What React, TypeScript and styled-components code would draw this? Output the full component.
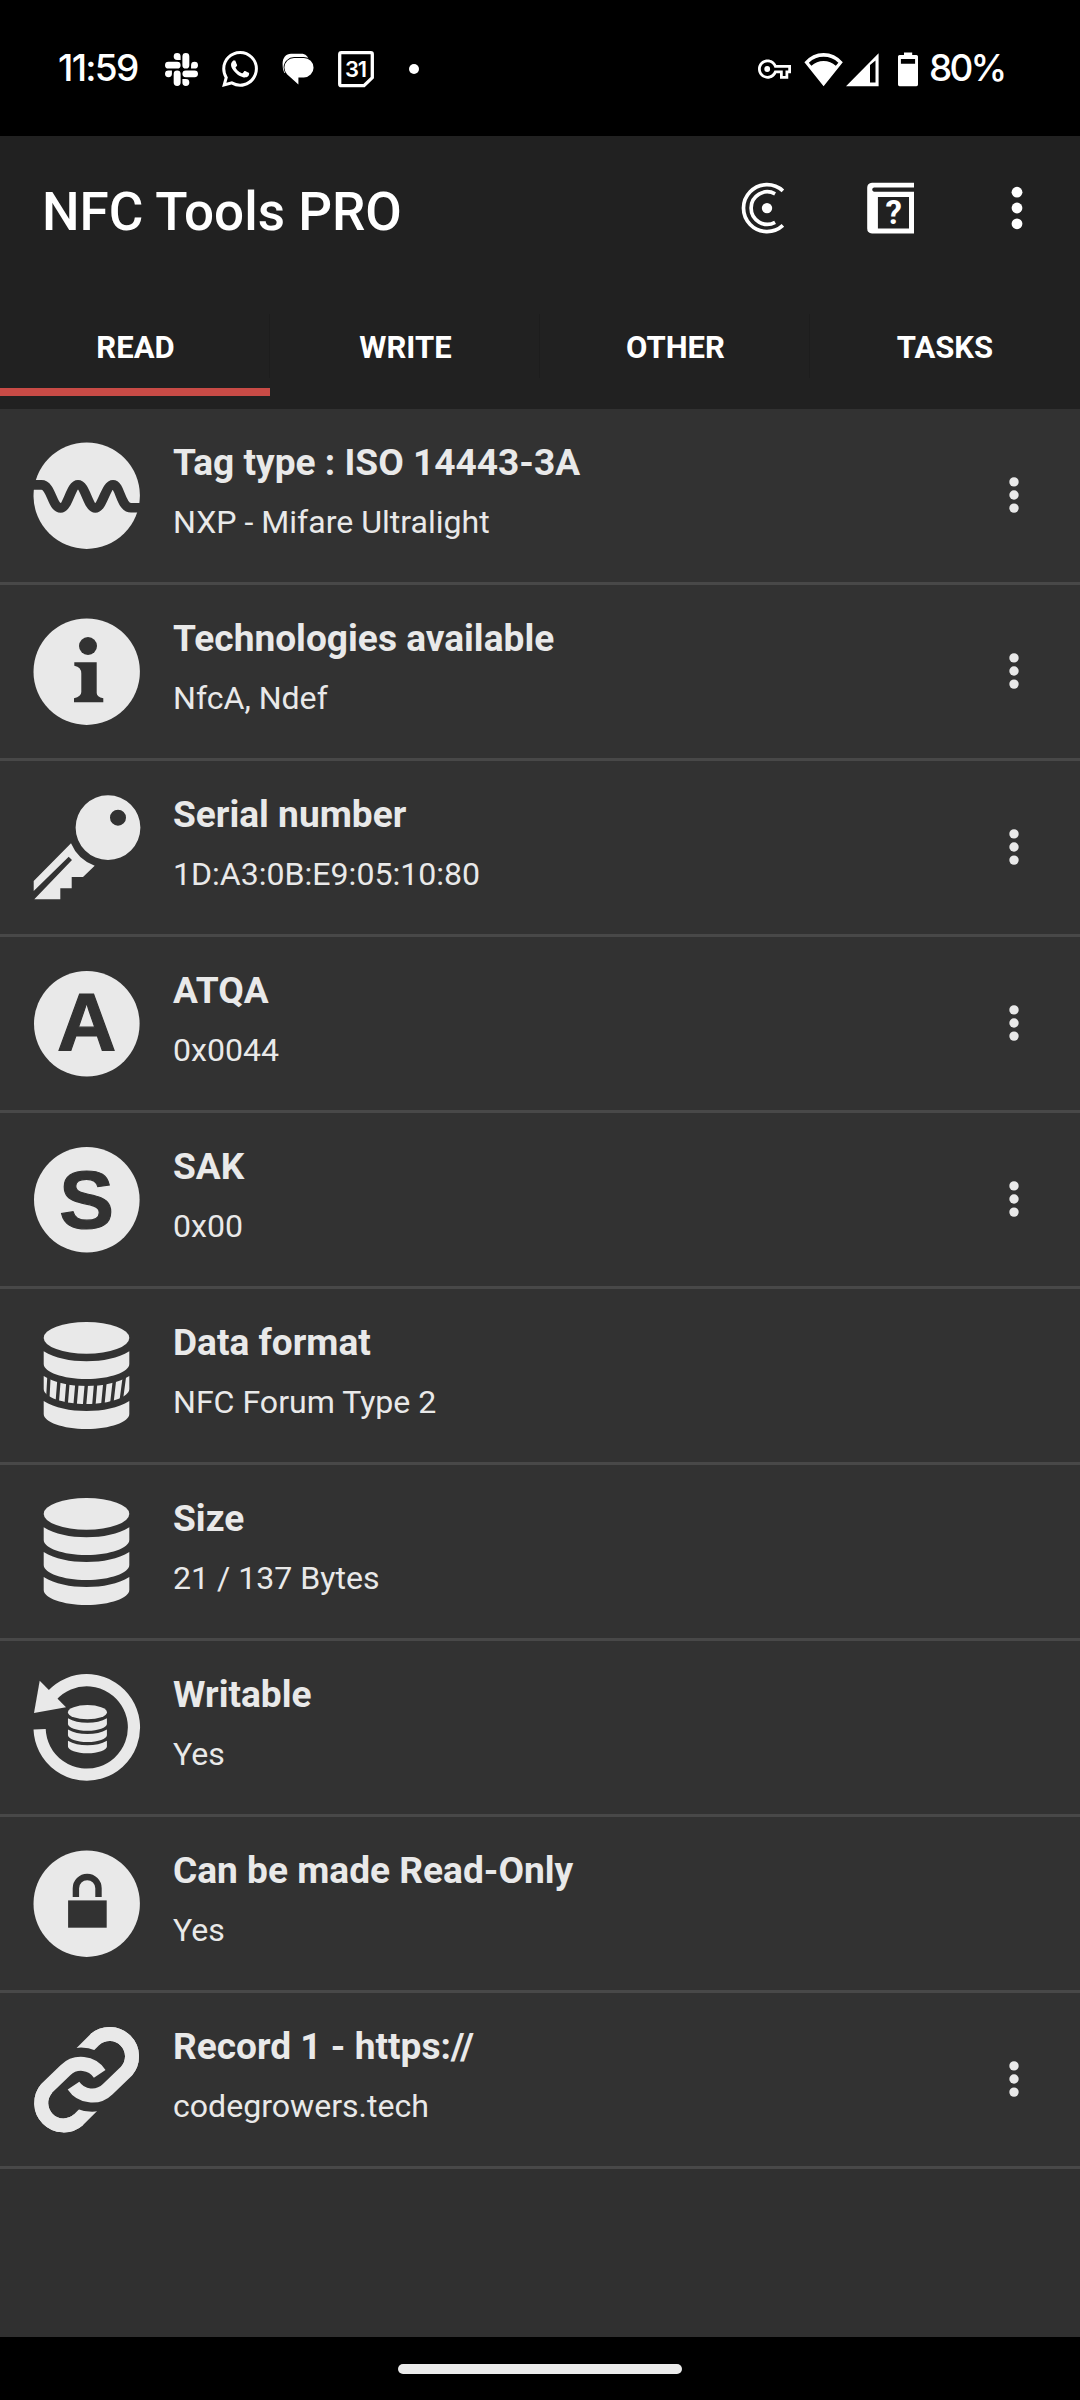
import React from "react";
import styled, { createGlobalStyle } from "styled-components";
import { SiSlack, SiWhatsapp } from "react-icons/si";

const INK = "#e9e9e9";
const ROW_BG = "#323232";

const GlobalStyle = createGlobalStyle`
  html, body { margin: 0; padding: 0; background: #000; }
  * { box-sizing: border-box; }
  svg { display: block; flex: none; }
`;

const Screen = styled.div`
  width: 1080px;
  height: 2400px;
  display: flex;
  flex-direction: column;
  overflow: hidden;
  background: #303030;
  font-family: Roboto, "Noto Sans", sans-serif;
  color: #fff;
`;

const StatusBar = styled.header`
  height: 136px;
  background: #000;
  display: flex;
  align-items: center;
  justify-content: space-between;
  padding: 2px 76px 0 58px;
`;

const StatusGroup = styled.div`
  display: flex;
  align-items: center;
`;

const StatusText = styled.span<{ $width: number; $spacing: number }>`
  width: ${(p) => p.$width}px;
  font-family: Inter, Roboto, sans-serif;
  font-size: 37px;
  font-weight: 500;
  line-height: 44px;
  margin-top: -2px;
  letter-spacing: ${(p) => p.$spacing}px;
  white-space: nowrap;
`;

const Gap = styled.span<{ $w: number }>`
  flex: none;
  width: ${(p) => p.$w}px;
`;

const AppHeader = styled.div`
  height: 273px;
  background: #212121;
  display: flex;
  flex-direction: column;
`;

const Toolbar = styled.div`
  height: 147px;
  display: flex;
  align-items: center;
  padding: 0 56px 0 42px;
`;

const AppTitle = styled.h1`
  flex: 1;
  margin: 0;
  padding-top: 4px;
  font-size: 53px;
  line-height: 62px;
  font-weight: 500;
  white-space: nowrap;
`;

const ToolbarActions = styled.div`
  display: flex;
  align-items: center;
  padding-bottom: 3px;
`;

const TabBar = styled.nav`
  display: grid;
  grid-template-columns: repeat(4, 1fr);
  height: 113px;
`;

const Tab = styled.button<{ $active?: boolean }>`
  display: flex;
  padding: 31px 0 0;
  border: 0;
  border-bottom: 8px solid ${(p) => (p.$active ? "#c84b46" : "transparent")};
  background: none;
  color: #fff;
  font: 700 31px/64px Roboto, sans-serif;
`;

const TabLabel = styled.span<{ $divider: boolean }>`
  flex: 1;
  height: 64px;
  padding: 2px 0 0 ${(p) => (p.$divider ? 2 : 0)}px;
  text-align: center;
  border-right: ${(p) => (p.$divider ? "1px solid #1d1d1d" : "0")};
`;

const List = styled.ul`
  flex: 1;
  margin: 0;
  padding: 0;
  list-style: none;
`;

const Row = styled.li`
  height: 176px;
  display: flex;
  align-items: flex-start;
  padding: 33px 0 0 33px;
  background: ${ROW_BG};
  border-bottom: 3px solid #484848;
  color: ${INK};
`;

const RowText = styled.div`
  flex: 1;
  padding-left: 32px;
  margin-top: -1px;
`;

const RowTitle = styled.div`
  font-size: 37.1px;
  line-height: 44px;
  font-weight: 700;
  white-space: nowrap;
`;

const RowValue = styled.div`
  margin-top: 18px;
  font-size: 32.1px;
  line-height: 38px;
  white-space: nowrap;
`;

const MoreButton = styled.button`
  margin: 0;
  padding: 30px 59px 0 0;
  border: 0;
  background: none;
`;

const NavBar = styled.footer`
  height: 63px;
  background: #000;
  display: flex;
  justify-content: center;
  padding-top: 27px;
`;

const NavPill = styled.div`
  width: 284px;
  height: 10px;
  border-radius: 5px;
  background: #ebebeb;
`;

const Glyph = ({ children }: { children: React.ReactNode }) => (
  <svg width="108" height="108" viewBox="0 0 108 108" fill={INK}>
    {children}
  </svg>
);

const Disc = () => <circle cx="53.7" cy="53.7" r="53.2" />;

const WaveIcon = () => (
  <Glyph>
    <Disc />
    <path
      d="M-2 42.9H8.5C18.5 42.9 18.8 65.9 27.7 65.9C35 65.9 37.7 42.7 45 42.7C52.3 42.7 55 65.9 62.3 65.9C69.6 65.9 72.7 42.7 80 42.7C87.3 42.7 87.5 65.8 98 65.8H110"
      fill="none"
      stroke={ROW_BG}
      strokeWidth="9.6"
    />
  </Glyph>
);

const InfoIcon = () => (
  <Glyph>
    <Disc />
    <g fill={ROW_BG}>
      <circle cx="55" cy="28" r="9" />
      <path d="M41.3 44.3H63.7V75Q63.7 79 70.3 80.3V84.3H41V80.3Q48.3 78.5 48.3 74V55.5Q48.3 49 41.3 47.7Z" />
    </g>
  </Glyph>
);

const KeyIcon = () => (
  <Glyph>
    <path
      fillRule="evenodd"
      d="M75 1.2A32.4 32.4 0 0 1 75 66A32.4 32.4 0 0 1 75 1.2ZM85 15.7A8 8 0 0 0 85 31.7A8 8 0 0 0 85 15.7Z"
    />
    <path d="M38 49.3L.7 87V97L35.7 62.7L39 66L1.3 105.3H27.3V94.3H38.7V83H50L61.7 71.7A40.5 40.5 0 0 1 38 49.3Z" />
  </Glyph>
);

const LetterIcon = ({ letter, baseline }: { letter: string; baseline: number }) => (
  <Glyph>
    <circle cx="53.8" cy="53.8" r="52.8" />
    <text
      x="53.5"
      y={baseline}
      textAnchor="middle"
      fontFamily="Liberation Sans, Arial, sans-serif"
      fontWeight="700"
      fontSize="82"
      fill={ROW_BG}
      stroke={ROW_BG}
      strokeWidth="1.2"
    >
      {letter}
    </text>
  </Glyph>
);

const BAND =
  "M10.7 29.2C22 36 37 39.2 53.5 39.2S85 36 96.3 29.2V42C96.3 50 77 57 53.5 57S10.7 50 10.7 42Z";

const Cylinder = ({ striped }: { striped?: boolean }) => (
  <>
    <ellipse cx="53.5" cy="15.9" rx="42.8" ry="15.8" />
    <path d={BAND} />
    <path d={BAND} transform="translate(0 24.9)" />
    {striped && (
      <path
        d="M16 54L14.6 80M26 58L24 83M35 60L33 84M44 61L42 84M53.4 62L51.4 85M62.7 61L60.7 85M72 60L69.7 84M81.6 57L78.6 83M91.5 54L88 80"
        stroke={ROW_BG}
        strokeWidth="3.4"
      />
    )}
    <path d={BAND} transform="translate(0 49.9)" />
  </>
);

const FormatIcon = () => (
  <Glyph>
    <Cylinder striped />
  </Glyph>
);

const SizeIcon = () => (
  <Glyph>
    <Cylinder />
  </Glyph>
);

const WritableIcon = () => (
  <Glyph>
    <path
      d="M6.6 55.3A47.2 47.2 0 1 0 19 21.5"
      fill="none"
      stroke={INK}
      strokeWidth="12.2"
    />
    <path d="M6.7 6.7L1 39L33 33.3Z" />
    <g transform="translate(30.1 31) scale(.455 .452)">
      <Cylinder />
    </g>
  </Glyph>
);

const LockIcon = () => (
  <Glyph>
    <Disc />
    <path
      d="M42.9 47.1V38.3A11.3 11.3 0 0 1 65.5 38.3V47.1"
      fill="none"
      stroke={ROW_BG}
      strokeWidth="6.4"
    />
    <rect x="35.1" y="50.4" width="38.6" height="27.3" fill={ROW_BG} />
  </Glyph>
);

const LinkHalf = () => (
  <g fill="none" stroke={INK} strokeWidth="14">
    <path mask="url(#link-cut)" d="M44 31.4L61.9 13.5A22.4 22.4 0 0 1 93.5 45.1" />
    <path d="M61.9 13.5A22.4 22.4 0 0 1 93.5 45.1L74.8 63.1A22.4 22.4 0 0 1 40.5 59.6" />
  </g>
);

const LinkIcon = () => (
  <Glyph>
    <mask id="link-cut" maskUnits="userSpaceOnUse" x="0" y="0" width="108" height="108">
      <rect width="108" height="108" fill="#fff" />
      <circle cx="48" cy="60" r="38.4" fill="#000" />
    </mask>
    <LinkHalf />
    <g transform="rotate(180 53.6 53.7)">
      <LinkHalf />
    </g>
  </Glyph>
);

const MessagesIcon = () => (
  <svg width="32" height="32" viewBox="0 0 32 32" fill="#fff">
    <path d="M9 .8H19C23.5 .8 26.6 3.5 27 8L8 20H2.5Q.6 17 .6 10.5C.6 5 4 .8 9 .8Z" />
    <path
      d="M12.2 4.9H21.8A9.7 9.7 0 0 1 21.8 24.4H16.4V31.4L5 21.2Q2.4 18.2 2.4 14.6A9.7 9.7 0 0 1 12.2 4.9Z"
      stroke="#000"
      strokeWidth="1.6"
      paintOrder="stroke"
    />
  </svg>
);

const CalendarIcon = () => (
  <svg width="38" height="38" viewBox="0 0 38 38">
    <path
      d="M4.4 2.7H33.8Q35.3 2.7 35.3 4.2V27.6L27 35.6H4.4Q2.7 35.6 2.7 33.9V4.4Q2.7 2.7 4.4 2.7Z"
      fill="none"
      stroke="#fff"
      strokeWidth="3.3"
    />
    <text x="18.4" y="27" textAnchor="middle" fontFamily="Inter, sans-serif" fontWeight="600" fontSize="22" letterSpacing="-1.2" fill="#fff">
      31
    </text>
  </svg>
);

const VpnKeyIcon = () => (
  <svg width="33" height="20" viewBox="0 4.8 24 14.4" fill="#fff">
    <path d="M22 19h-6v-4h-2.68c-1.14 2.42-3.6 4-6.32 4-3.86 0-7-3.14-7-7s3.14-7 7-7c2.72 0 5.17 1.58 6.32 4H24v6h-2v4zm-4-2h2v-4h2v-2H11.94l-.23-.67C11.01 8.34 9.11 7 7 7c-2.76 0-5 2.24-5 5s2.24 5 5 5c2.11 0 4.01-1.34 4.71-3.33l.23-.67H18v4z" />
    <circle cx="6.7" cy="12" r="2.1" />
  </svg>
);

const WifiIcon = () => (
  <svg width="40" height="35" viewBox="0 0 40 35">
    <path
      fillRule="evenodd"
      fill="#fff"
      d="M.4 10.2Q8.5 1.1 19.6 1.1T38.8 10.2L19.6 34.2ZM4.8 10.7L7.4 13.8Q12.6 9 19.6 9T31.8 13.8L34.4 10.7Q28 4.8 19.6 4.8T4.8 10.7Z"
    />
  </svg>
);

const SignalIcon = () => (
  <svg width="34" height="35" viewBox="0 0 34 35">
    <path fillRule="evenodd" fill="#fff" d="M0 34.2H32.6V1.2ZM24 13L29.5 8.5V30.6H24Z" />
  </svg>
);

const BatteryIcon = () => (
  <svg width="20" height="35" viewBox="0 0 20 35">
    <path
      fillRule="evenodd"
      fill="#fff"
      d="M6 .4H14.2V3H18.4Q20 3 20 4.6V32.6Q20 34.2 18.4 34.2H1.6Q0 34.2 0 32.6V4.6Q0 3 1.6 3H6ZM2.9 7V11.8H17.1V7Z"
    />
  </svg>
);

const TagScanIcon = () => (
  <svg width="52" height="52" viewBox="0 0 52 52" fill="none" stroke="#fff" strokeWidth="3.7">
    <path d="M41.9 8.8A23.5 23.5 0 1 0 41.9 43.4" />
    <path d="M34.1 11.9A16.2 16.2 0 1 0 34.1 40.3" />
    <circle cx="26" cy="26.1" r="5.2" fill="#fff" stroke="none" />
  </svg>
);

const HelpBookIcon = () => (
  <svg width="48" height="52" viewBox="0 0 48 52">
    <path
      fillRule="evenodd"
      fill="#fff"
      d="M5 .8H47V5.4H7Q5.2 5.6 5.2 7.6T7 9.8H47V51.4H5Q.2 51 .2 46.4V5.8Q.2 1.2 5 .8ZM10.9 15V46.5H42V15Z"
    />
    <text x="26.6" y="42.3" textAnchor="middle" fontFamily="Roboto, sans-serif" fontWeight="700" fontSize="33" fill="#fff">
      ?
    </text>
  </svg>
);

const MoreIcon = ({ r, pitch, color }: { r: number; pitch: number; color: string }) => (
  <svg width="14" height="46" viewBox="-7 -23 14 46" fill={color}>
    <circle cy={-pitch} r={r} />
    <circle r={r} />
    <circle cy={pitch} r={r} />
  </svg>
);

const TABS = ["READ", "WRITE", "OTHER", "TASKS"];

const ROWS: { icon: React.ReactNode; title: string; value: string; more?: boolean }[] = [
  { icon: <WaveIcon />, title: "Tag type : ISO 14443-3A", value: "NXP - Mifare Ultralight", more: true },
  { icon: <InfoIcon />, title: "Technologies available", value: "NfcA, Ndef", more: true },
  { icon: <KeyIcon />, title: "Serial number", value: "1D:A3:0B:E9:05:10:80", more: true },
  { icon: <LetterIcon letter="A" baseline={79.7} />, title: "ATQA", value: "0x0044", more: true },
  { icon: <LetterIcon letter="S" baseline={81.8} />, title: "SAK", value: "0x00", more: true },
  { icon: <FormatIcon />, title: "Data format", value: "NFC Forum Type 2" },
  { icon: <SizeIcon />, title: "Size", value: "21 / 137 Bytes" },
  { icon: <WritableIcon />, title: "Writable", value: "Yes" },
  { icon: <LockIcon />, title: "Can be made Read-Only", value: "Yes" },
  { icon: <LinkIcon />, title: "Record 1 - https://", value: "codegrowers.tech", more: true },
];

export default function App() {
  return (
    <Screen>
      <GlobalStyle />
      <StatusBar>
        <StatusGroup>
          <StatusText $width={107} $spacing={-1.7}>11:59</StatusText>
          <SiSlack size={33} />
          <Gap $w={24} />
          <SiWhatsapp size={36} />
          <Gap $w={24} />
          <MessagesIcon />
          <Gap $w={23} />
          <CalendarIcon />
          <Gap $w={34} />
          <svg width="10" height="10" viewBox="0 0 10 10">
            <circle cx="5" cy="5" r="5" fill="#fff" />
          </svg>
        </StatusGroup>
        <StatusGroup>
          <VpnKeyIcon />
          <Gap $w={13} />
          <WifiIcon />
          <Gap $w={2} />
          <SignalIcon />
          <Gap $w={18} />
          <BatteryIcon />
          <Gap $w={11} />
          <StatusText $width={75} $spacing={-2.8}>80%</StatusText>
        </StatusGroup>
      </StatusBar>

      <AppHeader>
        <Toolbar>
          <AppTitle>NFC Tools PRO</AppTitle>
          <ToolbarActions>
            <TagScanIcon />
            <Gap $w={74} />
            <HelpBookIcon />
            <Gap $w={95} />
            <MoreIcon r={5.4} pitch={15.8} color="#fff" />
          </ToolbarActions>
        </Toolbar>
        <TabBar>
          {TABS.map((label, i) => (
            <Tab key={label} $active={i === 0}>
              <TabLabel $divider={i < TABS.length - 1}>{label}</TabLabel>
            </Tab>
          ))}
        </TabBar>
      </AppHeader>

      <List>
        {ROWS.map((row) => (
          <Row key={row.title}>
            {row.icon}
            <RowText>
              <RowTitle>{row.title}</RowTitle>
              <RowValue>{row.value}</RowValue>
            </RowText>
            {row.more && (
              <MoreButton aria-label="More">
                <MoreIcon r={4.7} pitch={13.1} color={INK} />
              </MoreButton>
            )}
          </Row>
        ))}
      </List>

      <NavBar>
        <NavPill />
      </NavBar>
    </Screen>
  );
}
